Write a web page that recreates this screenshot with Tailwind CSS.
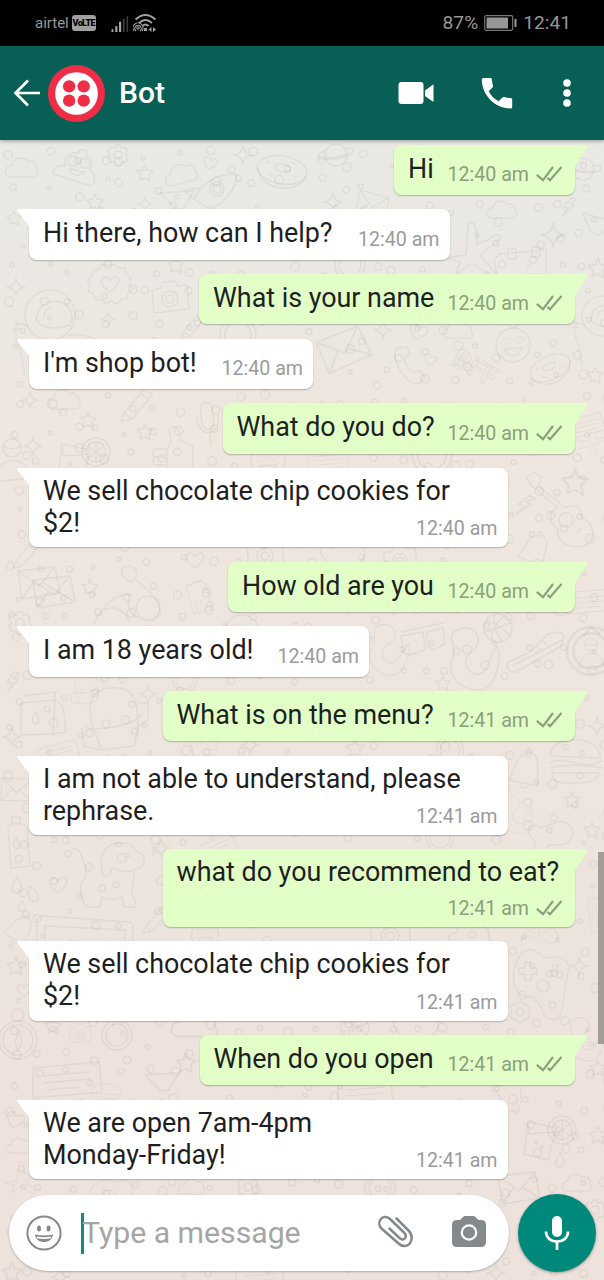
<!DOCTYPE html>
<html lang="en">
<head>
<meta charset="utf-8">
<title>Bot</title>
<script src="https://cdn.jsdelivr.net/npm/@tailwindcss/browser@4"></script>
</head>
<body class="bg-black">
<svg class="hidden">
  <defs>
    <g id="circle"><circle r="4"/></g>
    <g id="star"><path d="M0-8 2-3 8-2 4 2 5 8 0 5-5 7-4 2-8-2-2-3Z"/></g>
    <g id="sparkle"><path d="M0-9Q1-1 9 0 1 1 0 9-1 1-9 0-1-1 0-9Z"/></g>
    <g id="cloud"><path d="M-12 9C-20 7-17-2-10-2-10-10 2-13 6-6 12-9 16-2 14 1 20 8 12 10 7 9Z"/></g>
    <g id="heart"><path d="M0 8C-5 4-10 0-8-5-5-9-1-6 0-3 2-8 8-8 9-4 9 1 4 5 0 8Z"/></g>
    <g id="gear"><circle r="4"/><path d="M-2-10H2L3-7 7-8 9-4 8-1 10 2 8 7 4 7 2 10-2 10-4 7-8 7-10 3-8 0-10-4-7-8-3-7Z"/></g>
    <g id="poop"><path d="M-22 10C-25 3-18 0-12 0-16-8-10-14-2-15 0-20 7-22 8-14 16-10 15-4 12-1 20 2 22 14 16 15Z"/><circle cx="-5" cy="-6" r="5"/><circle cx="7" cy="-6" r="5"/><path d="M-8 2Q0 12 8 3Z"/></g>
    <g id="donut"><ellipse rx="25" ry="14"/><ellipse rx="8" ry="4" cy="-2"/><path d="M-25 1Q-20 17 0 18 20 17 25 1M-17-4 -13-6M13 5 17 3M-12 6-8 8M8-9 12-8"/></g>
    <g id="rocket"><path d="M-20 9C-10-10 5-16 22-16 24-4 12 12-4 20ZM-14-2-30 0-20 9M2 18-2 28-10 20"/><circle cx="3" cy="-1" r="7"/><circle cx="3" cy="-1" r="4"/></g>
    <g id="planet"><circle r="11"/><path d="M-10-5C-22 0-20 5-4 4 10 3 22-4 16-7 14-8 12-7 10-6M-10 2Q0 4 11-1"/></g>
    <g id="bolt"><path d="M2-10-5 1 0 1-4 10 6-3 1-3 7-9Z"/></g>
    <g id="plane"><path d="M-2-27C4-30 7-24 7-6L18-10C26-17 34-16 28-9L10 5 26 24C24 30 20 26 2 13L-14 24-10 12-24 8-4 5Z"/></g>
    <g id="calendar"><path d="M-28-10-22-16 24-20V12L-22 16ZM-28-10-24 16M-14-21h8v10h-8ZM10-23h8v10h-8ZM4 4h8M14 4h6M4-4h5"/></g>
    <g id="badge"><path d="M-8-20-2-18 4-20 8-16 15-16 16-10 21-6 19 0 23 5 18 9 17 15 11 15 7 20 1 17-4 20-8 16-15 16-16 10-22 7-20 1-23-4-18-8-17-14-11-14Z"/><use href="#heart"/></g>
    <g id="camera"><path d="M-18-8-9-10-7-16 5-17 8-12 17-13 19 11-16 15Z"/><circle r="8" cy="1"/><circle r="4" cy="1"/></g>
    <g id="astronaut"><circle r="25"/><path d="M-14 5C-12-13 4-18 16-10Q26 0 20 10-4 18-14 5ZM-6 2Q-6-6 2-8M-22 12C-40 0-35 24-30 34L-25 60M18 20Q40 18 50 28M-36 6l6 4M-38 14h8"/></g>
    <g id="envelope"><path d="M-20-12 17-16 22 10-16 16ZM-20-12 1 3 17-16M-16 16-4-1M22 10 5 0"/></g>
    <g id="phone"><path d="M-12-20C-20-10-10 15 2 19L11 14 7 6 0 6C-5 0-7-5-6-10L0-12-2-20Z"/></g>
    <g id="face"><circle r="17"/><path d="M-9 4Q0 18 9 3Z"/><use href="#heart" transform="translate(-6 -4) scale(.5)"/><use href="#heart" transform="translate(6 -5) scale(.5)"/></g>
    <g id="cup"><path d="M-18-12 10-6 2 26-22 20ZM-18-12-17 0 10-2"/><circle cx="16" cy="-4" r="14"/><circle cx="16" cy="-4" r="10"/><path d="M8-10 24 2M16-14V6M8 2 24-10"/><circle cx="-10" cy="8" r="1.5"/><circle cx="-4" cy="13" r="1.5"/></g>
    <g id="person"><circle r="9" cy="-12"/><path d="M-16 22C-16-6 16-6 18 18ZM-9-14Q0-8 9-14"/></g>
    <g id="thumb"><path d="M-8 20V0L-4-8-6-20C0-26 5-20 6-8L18-3V20M-8 0h-12q-5 4 0 8h10M-10 8h-10q-4 4 0 8h10"/></g>
    <g id="mic"><rect x="-6" y="-20" width="12" height="27" rx="6"/><path d="M-11-6C-11 16 11 16 11-6M0 12v12"/></g>
    <g id="pencil"><path d="M-8 8 12-16 20-10 0 14-11 16ZM-8 8 0 14M8-12 16-6"/></g>
    <g id="guitar"><path d="M-36-30-28-36-20-30-24-22 4 0C14-6 20 0 20 10 34 16 34 32 22 38 6 42-6 32-4 22-14 14-14 2-4 0L-30-22Z"/><circle cx="4" cy="12" r="7"/><path d="M14 26l6-6"/></g>
    <g id="bunny"><path d="M-8-30C4-36 10-26 4-18-2-14-10-22-8-30ZM6-18C18-8 30 0 30 16L22 24M-30 18C-20-4-8-2 0-4-4 6-2 14 8 20M-36 26C-32 8-10 2 0 24"/><circle cx="18" cy="10" r="12"/></g>
    <g id="box"><path d="M-20-15 14-18 12 16-20 17ZM14-18 22-12 25 14 12 16M-18-22 14-26 14-18"/><path d="M-5-6Q-12 4-5 6 0 3-5-6Z"/></g>
    <g id="backpack"><path d="M-18 8C-30-30-12-36 8-34 22-32 26-22 26 8L22 24-10 28ZM-26 4C-26 10 20 6 30-8M-30 6l2 18 16 4M26-20l10 2v16l-10 6"/><circle cx="-6" cy="2" r="4"/><circle cx="14" cy="-2" r="4"/></g>
    <g id="glasses"><path d="M-24-6-2-10 0 8-16 13-22 10ZM2-10 18-14 20 2 8 8 2 4ZM-24-10 18-19"/></g>
    <g id="ball"><circle r="14"/><path d="M-12-7Q2-4 12 8M-13 4Q0 0 13-5M-4-13Q-4 4 4 13M6-12Q-8 0-6 13"/></g>
    <g id="shoe"><path d="M-30 12-8 2 10-16 22-18C28-16 26-6 20-2L-22 22C-30 22-32 18-30 12ZM-26 16 24-10M-2-4l5 5M4-10l5 5"/></g>
    <g id="worm"><path d="M-8-30C10-38 20-20 8-10-4 0 0 10 10 14 24 16 24-4 32-14 38 0 30 32 12 30-12 28-18 10-12-4-8-14-20-24-8-30Z"/></g>
    <g id="burger"><path d="M-24-4C-24-26 28-26 26-2ZM-24 2Q-12-2 0 3 14 8 28 1M-24 8Q0 2 28 8M-22 13H25Q24 24-4 23-22 24-22 13Z"/></g>
    <g id="bell"><path d="M-14 12C-8 4-12-14 2-18 16-20 12 0 16 14ZM-2-18 2-23 6-18M-2 16q4 4 8 0"/></g>
    <g id="dog"><path d="M-38-24C-30-30-20 0-26 6-34 14-26 30-24 34H-10L-8 24C0 28 8 26 12 24L14 34H26C26 26 22 24 22 20L24 0"/><path d="M-8-6C-14-30 18-38 26-22 38-18 36-6 26-4 14 2 4-4 2-6 0 8-10 6-8-6Z"/><circle cx="18" cy="-18" r="2"/></g>
    <g id="bottle"><path d="M-10-14C-10-20 8-20 9-14L12 24-7 26ZM-6-19v-6h8v6M-2-4q-6 9 1 11 6-3-1-11Z"/></g>
    <g id="frame"><path d="M-48 20V-16Q-46-20-42-20L44-14Q48-13 48-9V20M-40 20V-10L40-6V20"/></g>
    <g id="drop"><path d="M0-8Q-10 7 0 8 9 5 0-8Z"/></g>
    <g id="bone"><path d="M-20 0C-26-10-14-14-10-8L8-14C22-16 28 0 18 6 14 12 4 6-2 10-6 20-20 16-14 8Z"/></g>
    <g id="pad"><path d="M-22-34C-10-42-4-28 2-28 12-30 20-30 24-20L16 28C10 38-2 34-4 20L-14 10C-30 16-40-14-22-34Z"/><circle cx="-2" cy="0" r="6"/><circle cx="10" cy="-18" r="3"/><circle cx="15" cy="-11" r="3"/><circle cx="5" cy="-12" r="3"/><path d="M-20-24h6v6h6v6h-6v6h-6v-6h-6v-6h6Z"/></g>
    <g id="compass"><circle r="19"/><circle r="15"/><circle cy="-25" r="6"/><path d="M-3 2 1-10 4 1 0 11Z"/></g>
    <g id="ring"><circle r="15"/><circle r="11"/><path d="M-5-9 0-15 6-10"/></g>
    <g id="card"><path d="M-34-10 32-16 35 14-34 20ZM-24-2 22-6M-24 5 24 1M-20 12 14 9"/></g>
    <g id="tri"><path d="M-17-7 17-9 6 9-2 8Z"/></g>
    <g id="ticks"><path d="M.8 8.800 7 14.200 17 1M11.500 12 14 14.200 25.500 1"/></g>
    <g id="tailL"><path d="M.5 0H14V20H12.500Q12.500 17.500 10.800 15.500L.8 2.500Q-.6 .3 .5 0Z"/></g>
    <g id="tailR"><path d="M13.500 0H0V24H2Q2 20.500 3.500 18.500L13.800 3Q15 .3 13.500 0Z"/></g>
  </defs>
</svg>

<div class="relative flex h-[1280px] w-[604px] flex-col overflow-hidden font-[Roboto,sans-serif]">
  <header class="flex h-[46px] shrink-0 items-center bg-black pl-[35px] pr-[33px] text-[#979797]">
    <span class="text-[15px] leading-none">airtel</span>
    <span class="ml-[3px] flex h-4 w-6 items-center justify-center rounded-[3px] bg-[#a0a0a0] text-[9px] font-black leading-none tracking-[-0.6px] text-black">VoLTE</span>
    <svg class="ml-[15px] mt-px h-[16px] w-[18px]" viewBox="0 0 18 17"><g fill="#a8a8a8"><path d="M0 14h2v3H0zM4 11h2.200v6H4zM8 6h2.200v11H8z"/><path fill="#3b3b3b" d="M12 3h2v14h-2zM16 0h1.600v17H16z"/></g></svg>
    <svg class="ml-[4px] h-[18px] w-[24px]" viewBox="0 0 24 18" fill="none" stroke="#a0a0a0" stroke-width="1.800"><path d="M2.500 5.500Q12.500-3.500 22.500 5.500M6 9Q12.500 3 19 9M9.500 12Q12.500 9 15.500 12"/><g stroke-width="1.100"><circle cx="5" cy="14" r="1.200"/><path d="M3 17A3.200 3.200 0 1 1 7 17M1 17A5 5 0 1 1 9 17"/></g><path fill="#a0a0a0" stroke="none" d="M11 14h3v3h-3zM15.500 15.500l3-2.500v5zM23 15.500l-3-2.500v5z"/></svg>
    <span class="ml-auto text-[19.200px] leading-none">87%</span>
    <svg class="ml-[6px] h-4 w-[33px]" viewBox="0 0 33 16"><rect x=".7" y=".7" width="28" height="14.600" rx="1.500" fill="none" stroke="#777" stroke-width="1.200"/><path fill="#979797" d="M2.500 2.500h21.500v11H2.500zM30.500 4h2v8h-2z"/></svg>
    <span class="ml-[6px] text-[19.200px] leading-none">12:41</span>
  </header>

  <nav class="relative z-10 flex h-[94px] shrink-0 items-center bg-[#085f55] pl-[13px] pr-[33px] text-white shadow-[0_1px_4px_rgba(0,0,0,0.35)]">
    <svg class="h-7 w-7" viewBox="0 0 28 28" fill="none" stroke="#fff" stroke-width="2.700"><path d="M27 14H2.500M15 1.500 2.500 14 15 26.500"/></svg>
    <svg class="ml-[6px] size-[59px]" viewBox="0 0 60 60"><circle cx="30" cy="30" r="29" fill="#ef2d46"/><circle cx="30" cy="30" r="21.700" fill="#fff"/><g fill="#ef2d46"><circle cx="22.500" cy="22.700" r="6.300"/><circle cx="37.300" cy="22.700" r="6.300"/><circle cx="22.500" cy="37.300" r="6.300"/><circle cx="37.300" cy="37.300" r="6.300"/></g></svg>
    <span class="ml-[13px] text-[30px] font-medium leading-none">Bot</span>
    <svg class="ml-auto h-6 w-9" viewBox="0 0 36 24" fill="#fff"><rect x=".5" y="1" width="25" height="22" rx="3"/><path d="M27 9.500 35.500 3.200V21L27 15Z"/></svg>
    <svg class="ml-[47px] h-8 w-8" viewBox="0 0 32 32" fill="#fff"><path d="M2.300 1H9.500Q11 1 11 2.500C11 5 11.500 7 12 8.700Q12.300 9.800 11.500 10.600L7.700 14.300C10.300 19 13.300 22 17.500 24.200L21.500 20.500Q22.300 19.700 23.500 20C25.500 20.600 27.500 21 29.700 21Q31.200 21 31.200 22.500V30Q31.200 31.500 29.700 31.500C14 31.500 .8 18 .8 2.500Q.8 1 2.300 1Z"/></svg>
    <svg class="ml-[50px] h-7 w-2" viewBox="0 0 8 28" fill="#fff"><circle cx="4" cy="4" r="3.800"/><circle cx="4" cy="14" r="3.800"/><circle cx="4" cy="24" r="3.800"/></svg>
  </nav>

  <main class="relative flex grow flex-col bg-linear-to-b from-[#e9e9e5] via-[#eee6df] via-25% to-[#ede2dc]">
    <svg id="wallpaper" class="absolute left-0 top-0 h-[1140px] w-[604px]" viewBox="0 140 604 1140" fill="none" stroke="#6b6560" stroke-opacity=".085" stroke-width="1.500" stroke-linejoin="round"></svg>

    <section id="chat" class="relative flex flex-col gap-[14.3px] pl-[29px] pr-[29px] pt-[4.500px] text-[26.900px] leading-8 text-[#1f1f1f]"></section>

    <footer class="relative mt-[15px] flex items-center gap-[9px] pl-[8.500px]">
      <div class="flex h-[76px] w-[500px] items-center rounded-full bg-white pl-[17.500px] pr-[22px] shadow-[0_1px_2px_rgba(0,0,0,0.25)]">
        <svg class="size-9" viewBox="0 0 36 36" fill="none" stroke="#84898c" stroke-width="2"><circle cx="18" cy="18" r="16.600"/><ellipse cx="13" cy="13.500" rx="2" ry="2.900" fill="#84898c" stroke="none"/><ellipse cx="22.500" cy="13.500" rx="2" ry="2.900" fill="#84898c" stroke="none"/><path d="M9 19.500Q18 21.500 27 19.500C26 29.500 10 29.500 9 19.500Z" fill="#84898c" stroke="none"/><path d="M11 22.400Q18 24 25 22.400" stroke="#fff" stroke-width="1.700"/></svg>
        <span class="ml-[18.500px] h-[41px] w-[3.500px] bg-[#128c7e]"></span>
        <span class="-ml-[2px] text-[30.200px] leading-none text-[#a5a5a5]">Type a message</span>
        <svg class="ml-auto -mt-[2px] h-9 w-9" viewBox="0 0 36 36" fill="none" stroke="#84898c" stroke-width="2.500" stroke-linecap="round"><path d="M19.500 4.500 31.500 16.500C37.500 22.500 34 32 27.500 32 25 32 23 31 21 29L4.500 14.500C-1 9 5-1 12.500 4.500L27 18.500C31 22.500 27 27.500 23 24.500L12.500 14.500"/></svg>
        <svg class="ml-[38px] -mt-[5px] h-8 w-9" viewBox="0 0 36 32"><path fill="#84898c" d="M6 5H9L12 2Q13 1 14.500 1H22Q23.500 1 24.500 2L27.500 5H30Q35 5 35 10V27Q35 32 30 32H6Q1 32 1 27V10Q1 5 6 5Z"/><circle cx="18" cy="17.500" r="7.200" fill="none" stroke="#fff" stroke-width="2.200"/></svg>
      </div>
      <div class="flex size-[78.500px] shrink-0 items-center justify-center rounded-full bg-[#00897b] shadow-[0_1px_3px_rgba(0,0,0,0.35)]">
        <svg class="h-9 w-7" viewBox="0 0 28 36"><rect x="9" y="1" width="10" height="21" rx="5" fill="#fff"/><path d="M3 16.500C3 30 25 30 25 16.500M14 26.500V35" fill="none" stroke="#fff" stroke-width="2.700"/></svg>
      </div>
    </footer>
  </main>
  <div class="absolute right-0 top-[852px] z-20 h-[192px] w-[6.500px] bg-[#a39d98]"></div>
</div>

<script>
const messages = [
  ['out', 181, 50.4, 'Hi', '12:40 am'],
  ['in', 420.5, 50.4, 'Hi there, how can I help?', '12:40 am'],
  ['out', 376, 50.4, 'What is your name', '12:40 am'],
  ['in', 284, 50.4, "I'm shop bot!", '12:40 am'],
  ['out', 352.5, 50.4, 'What do you do?', '12:40 am'],
  ['in', 478.5, 79.3, 'We sell chocolate chip cookies for<br>$2!', '12:40 am'],
  ['out', 347, 50.4, 'How old are you', '12:40 am'],
  ['in', 340, 50.4, 'I am 18 years old!', '12:40 am'],
  ['out', 412.5, 50.4, 'What is on the menu?', '12:41 am'],
  ['in', 478.5, 79.3, 'I am not able to understand, please<br>rephrase.', '12:41 am'],
  ['out', 412.5, 77.8, 'what do you recommend to eat?', '12:41 am'],
  ['in', 478.5, 79.3, 'We sell chocolate chip cookies for<br>$2!', '12:41 am'],
  ['out', 375.5, 50.4, 'When do you open', '12:41 am'],
  ['in', 478.5, 79.3, 'We are open 7am-4pm<br>Monday-Friday!', '12:41 am']
];
document.getElementById('chat').innerHTML = messages.map(([dir, w, h, text, time]) => {
  const out = dir === 'out';
  return `<article class="${out ? 'self-end bg-[#e1ffc7] rounded-tr-none' : 'self-start bg-white rounded-tl-none'} relative grid rounded-lg px-[14px] shadow-[0_1px_1.500px_rgba(0,0,0,0.25)]" style="width:${w}px;height:${h}px">
    <svg class="absolute top-0 w-[15px] ${out ? '-right-[13px] h-6 fill-[#e1ffc7]' : '-left-[12px] h-5 fill-white'}" viewBox="0 0 15 ${out ? 24 : 20}"><use href="#${out ? 'tailR' : 'tailL'}"/></svg>
    <p class="relative col-start-1 row-start-1 whitespace-nowrap tracking-[-0.02px] ${h < 60 ? 'pt-[8px]' : 'pt-[7px]'}">${text}</p>
    <div class="relative col-start-1 row-start-1 flex items-center gap-[7px] self-end justify-self-end text-[19.600px] leading-6 ${h < 60 ? 'mb-[8px]' : 'mb-[6px]'} ${out ? '-mr-[2px] text-[#8ba07c]' : '-mr-[4px] text-[#9b9b9b]'}"><span>${time}</span>${out ? '<svg class="-mt-[2px] h-4 w-[27px] fill-none stroke-[#8ba07c]" stroke-width="2.200" viewBox="0 0 27 16"><use href="#ticks"/></svg>' : ''}</div>
  </article>`;
}).join('');

// Wallpaper doodles: name, x, y, scale, rotation
const doodles = [
  ['cloud',22,168,1,0],['poop',77,168,1,10],['gear',118,155,1,0],['star',145,173,1,0],['sparkle',243,155,1,0],['cloud',181,174,1,-15],['heart',210,163,.8,20],['donut',282,170,1,10],['rocket',214,190,1,0],['star',95,202,1,0],['tri',177,200,1,0],['sparkle',145,204,.8,0],
  ['planet',336,155,1,0],['planet',583,169,1,15],['cloud',502,210,.9,0],['bolt',568,207,1,10],['plane',470,250,1,0],['sparkle',553,235,1.3,0],['calendar',522,270,1,0],['sparkle',333,202,1,0],['envelope',372,205,.8,20],['tri',596,225,1,20],['star',598,268,1.2,0],
  ['badge',110,284,1,0],['camera',170,298,1,0],['astronaut',50,315,1,0],['sparkle',16,287,1,0],['sparkle',108,319,.8,0],['star',176,265,1,0],['star',14,218,.9,0],['ring',238,335,1.2,0],['pencil',190,325,.8,0],['ring',350,265,1,0],
  ['envelope',343,350,1.2,-15],['phone',412,366,1,-10],['heart',430,360,.7,20],['face',513,345,1,0],['donut',550,368,.85,-25],['astronaut',602,316,.8,0],['star',595,375,1,0],['heart',418,332,1,20],['sparkle',383,330,1,0],['cloud',458,330,.9,0],
  ['cup',80,456,1,0],['person',12,460,1,0],['star',88,420,1,0],['star',145,432,1,0],['thumb',175,449,1,0],['mic',208,422,1,-8],['pencil',132,405,1,0],['sparkle',33,446,1,0],['cloud',64,400,1,0],['sparkle',30,400,.9,0],['face',268,462,1,0],['ring',432,455,1.3,0],['card',328,458,.6,0],
  ['guitar',562,508,1,0],['star',575,482,1.6,0],['card',583,425,.6,-10],['bolt',524,505,1.1,20],['bell',533,550,.9,20],['plane',590,440,.5,20],['bone',342,556,1,0],['camera',400,560,.9,0],
  ['envelope',38,583,1,0],['envelope',53,592,1,0],['star',90,587,1,0],['bunny',130,598,1,0],['calendar',198,598,.6,80],['card',590,600,.7,0],['heart',195,560,1,0],['gear',20,623,1.1,0],['pencil',22,555,.8,0],['camera',265,555,1,0],['face',242,632,1,0],
  ['glasses',425,642,1,0],['ball',498,628,1,0],['shoe',538,650,1,0],['ring',591,651,1.6,0],['person',591,653,.7,0],['worm',465,660,1,0],['worm',382,650,.8,10],['sparkle',148,694,1,0],['backpack',85,690,.5,0],['bolt',12,682,1,0],['ring',185,680,.8,0],['star',443,683,.9,0],
  ['box',41,718,1,0],['backpack',112,722,1,0],['sparkle',12,737,1,0],['card',58,752,.6,-10],['calendar',205,748,.5,0],['sparkle',250,745,1,0],['burger',574,760,1,0],['bell',524,770,1,8],['star',572,800,1,0],['star',592,830,1,0],['bone',550,836,1,0],['ring',450,750,.9,0],['star',355,748,1.1,0],['sparkle',597,726,1,0],
  ['envelope',16,790,.8,10],['bottle',18,842,1,0],['dog',110,873,1,0],['heart',58,885,1,0],['drop',17,885,1,0],['drop',33,894,1,-20],['drop',22,906,.7,0],['frame',85,936,1,0],['bell',18,930,.8,30],['sparkle',161,848,1,0],['pencil',152,920,.8,0],['face',205,935,.8,0],['worm',512,815,.6,0],['card',215,848,.6,-20],['ring',440,838,.9,0],['camera',390,935,1.1,0],['cloud',470,935,1.3,0],['bunny',540,930,.6,0],['card',598,915,.5,90],
  ['pad',545,986,1,0],['sparkle',579,966,1,0],['gear',520,1012,1,0],['star',16,966,1.1,0],['heart',24,990,.8,0],['compass',18,1040,1,0],['ring',117,1035,1,0],['star',53,1026,1,0],['camera',80,1034,.6,0],['card',67,1078,1,0],['star',186,1063,1.2,0],['tri',162,1082,1,0],['cloud',195,1024,1.4,0],['ball',355,1028,1,0],['bone',415,1028,1,0],['worm',580,1040,.7,0],['star',598,1068,1,0],
  ['cup',546,1134,1,0],['envelope',518,1188,1,0],['cloud',577,1183,.9,0],['drop',560,1160,.9,0],['heart',15,1120,1,20],['cloud',19,1146,.8,0],['plane',20,1178,.6,0],['burger',105,1096,.6,0],['bell',512,1094,.9,160],['star',598,1135,1.1,0],['card',365,1092,.8,0],['gear',248,1187,1,0],['cloud',192,1187,.8,0],['worm',110,1190,.7,90],['gear',595,1210,1,0],['ring',380,1188,1,0],['sparkle',496,1273,1,0],['star',12,1272,1.2,0],['sparkle',60,1277,1,0],['card',260,1278,.7,0]
];
let marks = doodles.map(([n, x, y, s, r]) => `<use href="#${n}" transform="translate(${x} ${y}) rotate(${r}) scale(${s})"/>`).join('');
let seed = 17;
const rnd = () => (seed = (seed * 16807) % 2147483647) / 2147483647;
for (let y = 150; y < 1280; y += 27) for (let x = 8; x < 604; x += 27)
  marks += `<circle cx="${(x + rnd() * 20).toFixed(1)}" cy="${(y + rnd() * 20).toFixed(1)}" r="${(1.8 + rnd() * 2.8).toFixed(1)}"/>`;
document.getElementById('wallpaper').innerHTML = marks + '<text x="450" y="364" font-size="27" font-weight="700" transform="rotate(30 450 364)">BFF</text>';
</script>
</body>
</html>
